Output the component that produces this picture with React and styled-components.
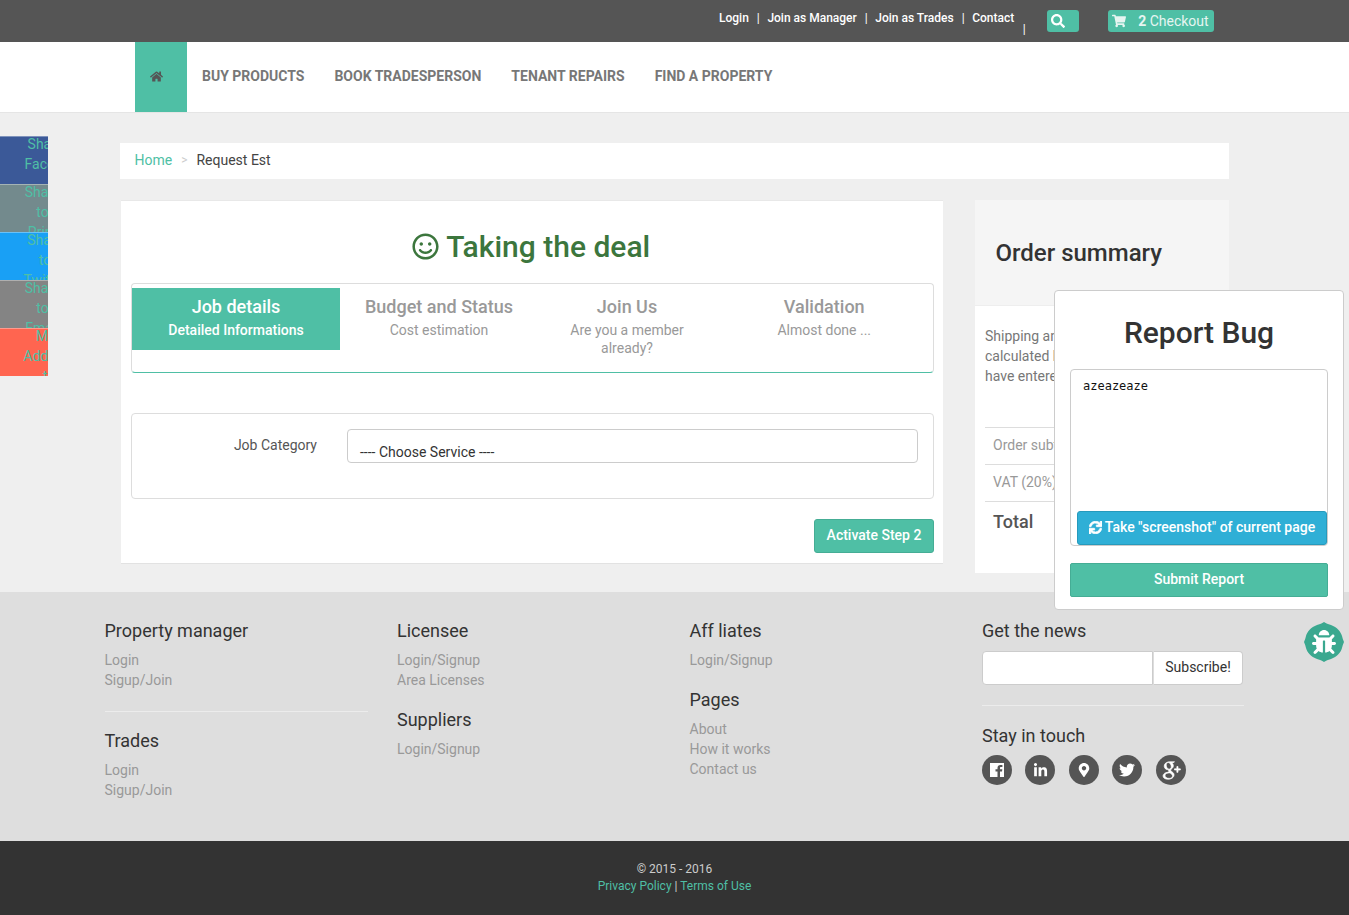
import React from 'react';
import styled, {createGlobalStyle} from 'styled-components';
import {
  FaHome,
  FaSearch,
  FaShoppingCart,
  FaRegSmile,
  FaSync,
  FaBug,
  FaLinkedinIn,
  FaMapMarkerAlt,
  FaTwitter,
} from 'react-icons/fa';
import {TiSocialGooglePlus} from 'react-icons/ti';

const TEAL = '#4fbfa5';

const GlobalStyle = createGlobalStyle`
  * { box-sizing: border-box; }
  html, body { margin: 0; padding: 0; }
  body {
    background: #efefef;
    font-family: Roboto, "Liberation Sans", sans-serif;
    font-size: 14px;
    color: #333;
    overflow: hidden;
  }
`;

const shareItems = [
  {color: '#3b5998', left: 24, width: 62, lines: ['Share on', 'Facebook']},
  {color: '#738a8d', left: 24, width: 37, lines: ['Share', 'to', 'Print']},
  {color: '#19a0f5', left: 22, width: 46, lines: ['Share', 'to', 'Twitter']},
  {color: '#848484', left: 24, width: 37, lines: ['Share', 'to', 'Email']},
  {color: '#ff6550', left: 23, width: 52, lines: ['Mail', 'Address', 'to']},
];

const steps = [
  {title: 'Job details', sub: 'Detailed Informations', active: true},
  {title: 'Budget and Status', sub: 'Cost estimation'},
  {title: 'Join Us', sub: 'Are you a member already?', narrow: true},
  {title: 'Validation', sub: 'Almost done ...'},
];

const App = () => {
  return (
    <Page>
      <GlobalStyle />
      <TopBar>
        <TopLink>Login</TopLink>
        <TopPipe>|</TopPipe>
        <TopLink>Join as Manager</TopLink>
        <TopPipe>|</TopPipe>
        <TopLink>Join as Trades</TopLink>
        <TopPipe>|</TopPipe>
        <TopLink>Contact</TopLink>
        <LowPipe>|</LowPipe>
        <SearchButton>
          <FaSearch size={14} />
        </SearchButton>
        <CheckoutButton>
          <FaShoppingCart size={14} />
          <b>2</b> Checkout
        </CheckoutButton>
      </TopBar>

      <NavBar>
        <HomeTile>
          <FaHome size={13} />
        </HomeTile>
        <NavLink>BUY PRODUCTS</NavLink>
        <NavLink>BOOK TRADESPERSON</NavLink>
        <NavLink>TENANT REPAIRS</NavLink>
        <NavLink>FIND A PROPERTY</NavLink>
      </NavBar>

      <ShareBar>
        {shareItems.map((item) => (
          <ShareItem key={item.lines.join()} $color={item.color}>
            <ShareLabel $left={item.left} $width={item.width}>
              {item.lines.map((line) => (
                <div key={line}>{line}</div>
              ))}
            </ShareLabel>
          </ShareItem>
        ))}
      </ShareBar>

      <Main>
        <Breadcrumb>
          <CrumbLink>Home</CrumbLink>
          <CrumbSep>&gt;</CrumbSep>
          <span>Request Est</span>
        </Breadcrumb>

        <Columns>
          <DealCard>
            <DealTitle>
              <FaRegSmile size={27} />
              Taking the deal
            </DealTitle>
            <StepBox>
              {steps.map((step) => (
                <Step key={step.title} $active={step.active}>
                  <StepTitle>{step.title}</StepTitle>
                  <StepSub $narrow={step.narrow} $active={step.active}>{step.sub}</StepSub>
                </Step>
              ))}
            </StepBox>
            <FormBox>
              <FieldLabel>Job Category</FieldLabel>
              <FakeSelect>---- Choose Service ----</FakeSelect>
            </FormBox>
            <ActionRow>
              <TealButton>Activate Step 2</TealButton>
            </ActionRow>
          </DealCard>

          <SummaryCard>
            <SummaryHead>Order summary</SummaryHead>
            <SummaryBody>
              <SummaryNote>
                Shipping and additional costs are calculated based on values you
                have entered.
              </SummaryNote>
              <SummaryRow>Order subtotal</SummaryRow>
              <SummaryRow>VAT (20%)</SummaryRow>
              <SummaryTotal>Total</SummaryTotal>
            </SummaryBody>
          </SummaryCard>
        </Columns>
      </Main>

      <Footer>
        <FooterColumn>
          <FooterHeading>Property manager</FooterHeading>
          <FooterLink>Login</FooterLink>
          <FooterLink>Sigup/Join</FooterLink>
          <FooterRule />
          <FooterHeading>Trades</FooterHeading>
          <FooterLink>Login</FooterLink>
          <FooterLink>Sigup/Join</FooterLink>
        </FooterColumn>
        <FooterColumn>
          <FooterHeading>Licensee</FooterHeading>
          <FooterLink>Login/Signup</FooterLink>
          <FooterLink>Area Licenses</FooterLink>
          <FooterGroup>
            <FooterHeading>Suppliers</FooterHeading>
            <FooterLink>Login/Signup</FooterLink>
          </FooterGroup>
        </FooterColumn>
        <FooterColumn>
          <FooterHeading>Aff liates</FooterHeading>
          <FooterLink>Login/Signup</FooterLink>
          <FooterGroup>
            <FooterHeading>Pages</FooterHeading>
            <FooterLink>About</FooterLink>
            <FooterLink>How it works</FooterLink>
            <FooterLink>Contact us</FooterLink>
          </FooterGroup>
        </FooterColumn>
        <FooterColumn>
          <FooterHeading>Get the news</FooterHeading>
          <NewsForm>
            <NewsInput />
            <NewsButton>Subscribe!</NewsButton>
          </NewsForm>
          <NewsRule />
          <FooterHeading>Stay in touch</FooterHeading>
          <SocialRow>
            <SocialIcon>
              <svg width="14" height="14" viewBox="0 0 14 14">
                <path
                  d="M0 0H14V14H10V8.500H12L12.300 6.300H10V5C10 4.300 10.300 4 11 4H12.400V2H10.500C8.500 2 7.500 3.200 7.500 5V6.300H5.500V8.500H7.500V14H0Z"
                  fill="#fff"
                />
              </svg>
            </SocialIcon>
            <SocialIcon><FaLinkedinIn size={15} /></SocialIcon>
            <SocialIcon><FaMapMarkerAlt size={14} /></SocialIcon>
            <SocialIcon><FaTwitter size={16} /></SocialIcon>
            <SocialIcon><PlusIcon size={28} /></SocialIcon>
          </SocialRow>
        </FooterColumn>
      </Footer>

      <BottomBar>
        <div>© 2015 - 2016</div>
        <BottomLinks>
          <BottomLink>Privacy Policy</BottomLink> | <BottomLink>Terms of Use</BottomLink>
        </BottomLinks>
      </BottomBar>

      <BugPopup>
        <BugTitle>Report Bug</BugTitle>
        <BugTextBox>
          <BugText>azeazeaze</BugText>
          <ScreenshotButton>
            <SyncIcon size={13} />
            Take "screenshot" of current page
          </ScreenshotButton>
        </BugTextBox>
        <SubmitButton>Submit Report</SubmitButton>
      </BugPopup>

      <BugBadge>
        <svg width="40" height="40" viewBox="0 0 40 40">
          <path
            d="M20 0 C23 2 25 2.5 27 3 C33 5 37 10 38 14 C38.5 16 39 18 40 20 C39 22 38.5 24 38 26 C37 30 33 35 27 37 C25 37.5 23 38 20 40 C17 38 15 37.5 13 37 C7 35 3 30 2 26 C1.500 24 1 22 0 20 C1 18 1.500 16 2 14 C3 10 7 5 13 3 C15 2.500 17 2 20 0 Z"
            fill="#3aa88f"
          />
        </svg>
        <BugGlyph>
          <FaBug size={24} />
        </BugGlyph>
      </BugBadge>
    </Page>
  );
};

export default App;

const Page = styled.div`
  position: relative;
  width: 1349px;
  height: 915px;
  overflow: hidden;
`;

const TopBar = styled.div`
  height: 42px;
  background: #555;
  padding-left: 719px;
  display: flex;
  align-items: flex-start;
  color: #fff;
`;

const TopLink = styled.a`
  font-size: 12px;
  font-weight: 500;
  line-height: 36px;
`;

const TopPipe = styled.span`
  font-size: 12px;
  line-height: 36px;
  margin: 0 7.6px 0 8px;
`;

const LowPipe = styled.span`
  font-size: 12px;
  line-height: 14px;
  margin: 22px 21.500px 0 8.500px;
`;

const SearchButton = styled.div`
  width: 32px;
  height: 22px;
  margin-top: 10px;
  padding-left: 4px;
  display: flex;
  align-items: center;
  background: ${TEAL};
  border-radius: 3px;
`;

const CheckoutButton = styled.div`
  width: 106px;
  height: 22px;
  margin: 10px 0 0 29px;
  padding-left: 4px;
  display: flex;
  align-items: center;
  background: ${TEAL};
  border-radius: 3px;
  font-size: 14px;
  color: #e6f5f1;
  white-space: pre;

  b {
    margin-left: 12px;
    font-weight: 700;
  }
`;

const NavBar = styled.div`
  height: 71px;
  background: #fff;
  border-bottom: 1px solid #e5e5e5;
  padding-left: 135px;
  display: flex;
  align-items: stretch;
`;

const HomeTile = styled.div`
  width: 52px;
  margin-right: 15px;
  padding: 0 10px 2px 0;
  display: flex;
  align-items: center;
  justify-content: center;
  background: ${TEAL};
  color: #555;
`;

const NavLink = styled.a`
  margin-right: 30px;
  font-size: 14px;
  font-weight: 700;
  color: #777;
  line-height: 68px;
`;

const ShareBar = styled.div`
  position: absolute;
  top: 136px;
  left: 0;
  width: 48px;
`;

const ShareItem = styled.div`
  height: 48px;
  overflow: hidden;
  background: ${(props) => props.$color};
  border-top: 1px solid rgba(255, 255, 255, 0.35);
  color: ${TEAL};
`;

const ShareLabel = styled.div`
  width: ${(props) => props.$width}px;
  margin: -3px 0 0 ${(props) => props.$left}px;
  font-size: 14px;
  line-height: 20px;
  text-align: center;
  white-space: nowrap;
`;

const Main = styled.div`
  width: 1109.500px;
  height: 479px;
  margin-left: 119.500px;
  padding-top: 30px;
`;

const Breadcrumb = styled.div`
  height: 36px;
  padding: 0 0 2px 15px;
  display: flex;
  align-items: center;
  background: #fff;
  font-size: 14px;
  color: #444;
`;

const CrumbLink = styled.a`
  color: ${TEAL};
`;

const CrumbSep = styled.span`
  margin: 0 9px;
  color: #ccc;
  font-size: 12px;
`;

const Columns = styled.div`
  display: flex;
  align-items: flex-start;
  margin-top: 21px;
  padding-left: 1.500px;
`;

const DealCard = styled.div`
  flex: none;
  width: 822px;
  height: 364px;
  padding: 0 9.500px 0 10px;
  background: #fff;
  border-top: 1px solid #e8e8e8;
  border-bottom: 1px solid #e2e2e2;
`;

const DealTitle = styled.h2`
  margin: 0;
  height: 82px;
  padding: 9px 2px 0 0;
  display: flex;
  align-items: center;
  justify-content: center;
  gap: 7px;
  font-size: 30px;
  font-weight: 500;
  color: #3c763d;
`;

const StepBox = styled.div`
  display: grid;
  grid-template-columns: 208px 198px 178px 1fr;
  align-items: start;
  height: 90px;
  padding-top: 4px;
  border: 1px solid #ddd;
  border-bottom-color: ${TEAL};
  border-radius: 4px;
`;

const Step = styled.div`
  height: ${(props) => (props.$active ? '62px' : 'auto')};
  padding-top: 8px;
  text-align: center;
  color: ${(props) => (props.$active ? '#fff' : '#999')};
  background: ${(props) => (props.$active ? TEAL : 'transparent')};
`;

const StepTitle = styled.div`
  font-size: 18px;
  font-weight: 500;
  line-height: 22px;
`;

const StepSub = styled.div`
  margin: 3px auto 0;
  max-width: ${(props) => (props.$narrow ? '130px' : 'none')};
  font-size: 14px;
  font-weight: ${(props) => (props.$active ? 500 : 400)};
  line-height: 18px;
`;

const FormBox = styled.div`
  margin-top: 40px;
  height: 86px;
  padding: 15px 15px 0;
  display: flex;
  align-items: flex-start;
  border: 1px solid #ddd;
  border-radius: 4px;
`;

const FieldLabel = styled.div`
  width: 170px;
  margin-right: 30px;
  padding-top: 8px;
  text-align: right;
  color: #555;
  font-size: 14px;
`;

const FakeSelect = styled.div`
  flex: 1;
  height: 34px;
  padding: 13px 12px 0;
  border: 1px solid #ccc;
  border-radius: 4px;
  background: #fff;
  color: #333;
  font-size: 14px;
  line-height: 18px;
`;

const ActionRow = styled.div`
  display: flex;
  justify-content: flex-end;
  margin: 20px -0.500px 0 0;
`;

const TealButton = styled.div`
  width: 120px;
  height: 34px;
  padding-bottom: 2px;
  display: flex;
  align-items: center;
  justify-content: center;
  background: ${TEAL};
  border: 1px solid #45ad95;
  border-radius: 3px;
  color: #fff;
  font-size: 14px;
  font-weight: 500;
`;

const SummaryCard = styled.div`
  flex: none;
  width: 254px;
  height: 373px;
  margin-left: 32px;
  background: #fff;
`;

const SummaryHead = styled.div`
  height: 106px;
  padding: 38px 0 0 20.500px;
  background: #f5f5f5;
  border-bottom: 1px solid #eee;
  font-size: 24px;
  font-weight: 500;
  line-height: 30px;
`;

const SummaryBody = styled.div`
  padding: 20px 10px 0;
`;

const SummaryNote = styled.p`
  margin: 0 0 41px;
  width: 225px;
  color: #777;
  font-size: 14px;
  line-height: 20px;
`;

const SummaryRow = styled.div`
  height: 37px;
  padding-left: 8px;
  border-top: 1px solid #ddd;
  color: #999;
  font-size: 14px;
  line-height: 35px;
`;

const SummaryTotal = styled(SummaryRow)`
  height: 40px;
  color: #555;
  font-size: 18px;
  font-weight: 500;
  line-height: 39px;
`;

const Footer = styled.div`
  height: 249px;
  padding: 28px 0 0 104.500px;
  display: grid;
  grid-template-columns: 292.500px 292.500px 292.500px 262px;
  align-items: start;
  background: #dedede;
`;

const FooterColumn = styled.div`
  display: flex;
  flex-direction: column;
  align-items: flex-start;
`;

const FooterHeading = styled.div`
  font-size: 18px;
  font-weight: 400;
  line-height: 22px;
  margin-bottom: 8px;
  color: #333;
`;

const FooterLink = styled.a`
  font-size: 14px;
  line-height: 20px;
  color: #999;
`;

const FooterRule = styled.div`
  width: 263px;
  height: 1px;
  margin: 21px 0 18px;
  background: #ececec;
`;

const FooterGroup = styled.div`
  margin-top: 19px;
  display: flex;
  flex-direction: column;
  align-items: flex-start;
`;

const NewsForm = styled.div`
  display: flex;
  margin-top: 1px;
`;

const NewsInput = styled.div`
  width: 171px;
  height: 34px;
  background: #fff;
  border: 1px solid #ccc;
  border-radius: 4px 0 0 4px;
`;

const NewsButton = styled.div`
  width: 90px;
  height: 34px;
  background: #fff;
  border: 1px solid #ccc;
  border-left: 1px solid #ddd;
  border-radius: 0 4px 4px 0;
  text-align: center;
  font-size: 14px;
  line-height: 30px;
  color: #333;
`;

const NewsRule = styled.div`
  width: 262px;
  height: 1px;
  margin: 20px 0 19px;
  background: #ececec;
`;

const SocialRow = styled.div`
  display: flex;
  gap: 13.400px;
`;

const SocialIcon = styled.div`
  width: 30px;
  height: 30px;
  display: flex;
  align-items: center;
  justify-content: center;
  background: #555;
  border-radius: 50%;
  color: #fff;
  overflow: hidden;
`;

const PlusIcon = styled(TiSocialGooglePlus)`
  flex: none;
  stroke: currentColor;
  stroke-width: 0.6px;
`;

const BottomBar = styled.div`
  height: 74px;
  padding-top: 20px;
  background: #333;
  color: #ccc;
  text-align: center;
  font-size: 12px;
  line-height: 17px;
`;

const BottomLinks = styled.div`
  color: #ccc;
`;

const BottomLink = styled.a`
  color: ${TEAL};
`;

const BugPopup = styled.div`
  position: absolute;
  top: 290px;
  left: 1054px;
  width: 290px;
  height: 320px;
  padding: 0 15px;
  background: #fff;
  border: 1px solid #ccc;
  border-radius: 4px;
`;

const BugTitle = styled.h3`
  margin: 0;
  height: 78px;
  padding-top: 23px;
  text-align: center;
  font-size: 30px;
  font-weight: 500;
  line-height: 38px;
  color: #333;
`;

const BugTextBox = styled.div`
  height: 177px;
  display: flex;
  flex-direction: column;
  justify-content: space-between;
  align-items: flex-end;
  border: 1px solid #ccc;
  border-radius: 4px;
`;

const BugText = styled.div`
  align-self: flex-start;
  padding: 8px 0 0 12px;
  font-family: "DejaVu Sans Mono", monospace;
  font-size: 12px;
  line-height: 16px;
  color: #111;
`;

const ScreenshotButton = styled.div`
  width: 250px;
  height: 34px;
  padding-bottom: 2px;
  display: flex;
  align-items: center;
  justify-content: center;
  gap: 3px;
  background: #2fafd6;
  border: 1px solid #269abc;
  border-radius: 3px;
  color: #fff;
  font-size: 14px;
  font-weight: 500;
  white-space: nowrap;
`;

const SyncIcon = styled(FaSync)`
  stroke: currentColor;
  stroke-width: 30px;
`;

const SubmitButton = styled.div`
  height: 34px;
  margin-top: 17px;
  padding-bottom: 2px;
  display: flex;
  align-items: center;
  justify-content: center;
  background: ${TEAL};
  border: 1px solid #45ad95;
  border-radius: 2px;
  color: #fff;
  font-size: 14px;
  font-weight: 500;
`;

const BugBadge = styled.div`
  position: absolute;
  top: 622px;
  left: 1304px;
  width: 40px;
  height: 40px;
`;

const BugGlyph = styled.div`
  position: absolute;
  top: 8px;
  left: 8px;
  color: #fff;
`;
